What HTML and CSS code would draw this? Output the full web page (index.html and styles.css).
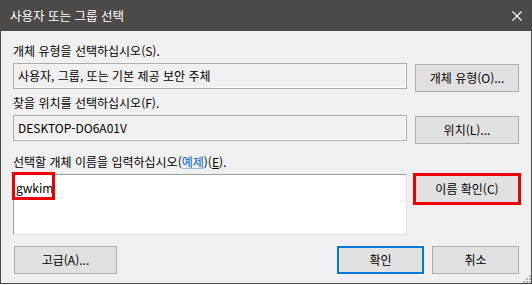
FILE: index.html
```html
<!DOCTYPE html>
<html lang="ko">
<head>
    <meta charset="UTF-8">
    <title>사용자 또는 그룹 선택</title>
    <link rel="stylesheet" href="styles.css">
</head>
<body>
    <div class="window">
        <div class="titlebar">
            <span class="title">사용자 또는 그룹 선택</span>
            <svg class="close" width="10" height="10" viewBox="0 0 10 10">
                <path d="M0.5 0.5 L9.5 9.5 M9.5 0.5 L0.5 9.5" stroke="#ffffff" stroke-width="1.1" fill="none"/>
            </svg>
        </div>

        <div class="content">
            <div class="label">개체 유형을 선택하십시오(S).</div>
            <div class="row">
                <div class="box">사용자, 그룹, 또는 기본 제공 보안 주체</div>
                <button class="btn">개체 유형(O)...</button>
            </div>

            <div class="label label-2">찾을 위치를 선택하십시오(F).</div>
            <div class="row">
                <div class="box">DESKTOP-DO6A01V</div>
                <button class="btn">위치(L)...</button>
            </div>

            <div class="label label-3">선택할 개체 이름을 입력하십시오(<span class="link">예제</span>)(<u>E</u>).</div>
            <div class="row">
                <div class="names">
                    <span class="name">gwkim</span>
                    <span class="mark mark-name"></span>
                </div>
                <button class="btn btn-check">이름 확인(C)</button>
            </div>

            <div class="footer">
                <button class="btn btn-advanced">고급(A)...</button>
                <div class="spacer"></div>
                <button class="btn btn-small btn-default">확인</button>
                <button class="btn btn-small">취소</button>
            </div>
        </div>

        <svg class="grip" width="9" height="9" viewBox="0 0 9 9">
            <rect x="7" y="1" width="2" height="2" fill="#b4b4b4"/>
            <rect x="4" y="4" width="2" height="2" fill="#b4b4b4"/>
            <rect x="7" y="4" width="2" height="2" fill="#b4b4b4"/>
            <rect x="1" y="7" width="2" height="2" fill="#b4b4b4"/>
            <rect x="4" y="7" width="2" height="2" fill="#b4b4b4"/>
            <rect x="7" y="7" width="2" height="2" fill="#b4b4b4"/>
        </svg>
    </div>
</body>
</html>
```

FILE: styles.css
```css
* {
    box-sizing: border-box;
}

body {
    margin: 0;
    background: #ffffff;
    font-family: "Noto Sans CJK KR", "Noto Sans", sans-serif;
    font-size: 12px;
    color: #000000;
}

.window {
    position: relative;
    width: 532px;
    height: 284px;
    border: 1px solid #4b4a48;
    background: #f0f0f0;
}

/* barra del titolo */
.titlebar {
    height: 30px;
    background: #4b4a48;
    color: #ffffff;
    display: flex;
    align-items: center;
    justify-content: space-between;
    padding: 0 9px;
}

.title {
    font-size: 12.5px;
    line-height: 16px;
}

.content {
    padding: 12px 12px 0 12px;
}

.label {
    height: 16px;
    line-height: 16px;
    margin-bottom: 4px;
    white-space: nowrap;
}

.label-2 {
    margin-top: 3px;
}

.label-3 {
    margin-top: 10px;
}

.link {
    color: #0066cc;
    text-decoration: underline;
    text-decoration-color: #99bbdd;
}

.row {
    display: grid;
    grid-template-columns: 394px 104px;
    column-gap: 8px;
    align-items: start;
}

.box {
    height: 26px;
    border: 1px solid #adadad;
    box-shadow: inset -1px -1px 0 #ffffff;
    padding-left: 4px;
    line-height: 23px;
    white-space: nowrap;
}

.btn {
    height: 28px;
    margin-top: 1px;
    border: 1px solid #adadad;
    background: #e1e1e1;
    font-family: inherit;
    font-size: 12px;
    color: #000000;
    padding: 0;
    line-height: 16px;
}

.names {
    position: relative;
    height: 61px;
    background: #ffffff;
    border: 1px solid;
    border-color: #a0a0a0 #e3e3e3 #e3e3e3 #a0a0a0;
    padding: 5px 0 0 2px;
    line-height: 16px;
}

/* riquadri rossi di evidenziazione */
.mark {
    position: absolute;
    border: 3px solid #ee0000;
}

.mark-name {
    left: -2px;
    top: -3px;
    width: 43px;
    height: 28px;
}

.btn-check {
    outline: 3px solid #ee0000;
    outline-offset: -1px;
}

.footer {
    display: flex;
    gap: 8px;
    margin-top: 11px;
}

.btn-advanced {
    width: 103px;
    margin-left: 1px;
    margin-top: 0;
}

.spacer {
    flex-grow: 1;
}

.btn-small {
    width: 87px;
    margin-top: 0;
}

.btn-default {
    border: 2px solid #0078d7;
}

.grip {
    position: absolute;
    right: 0;
    bottom: 0;
}
```
